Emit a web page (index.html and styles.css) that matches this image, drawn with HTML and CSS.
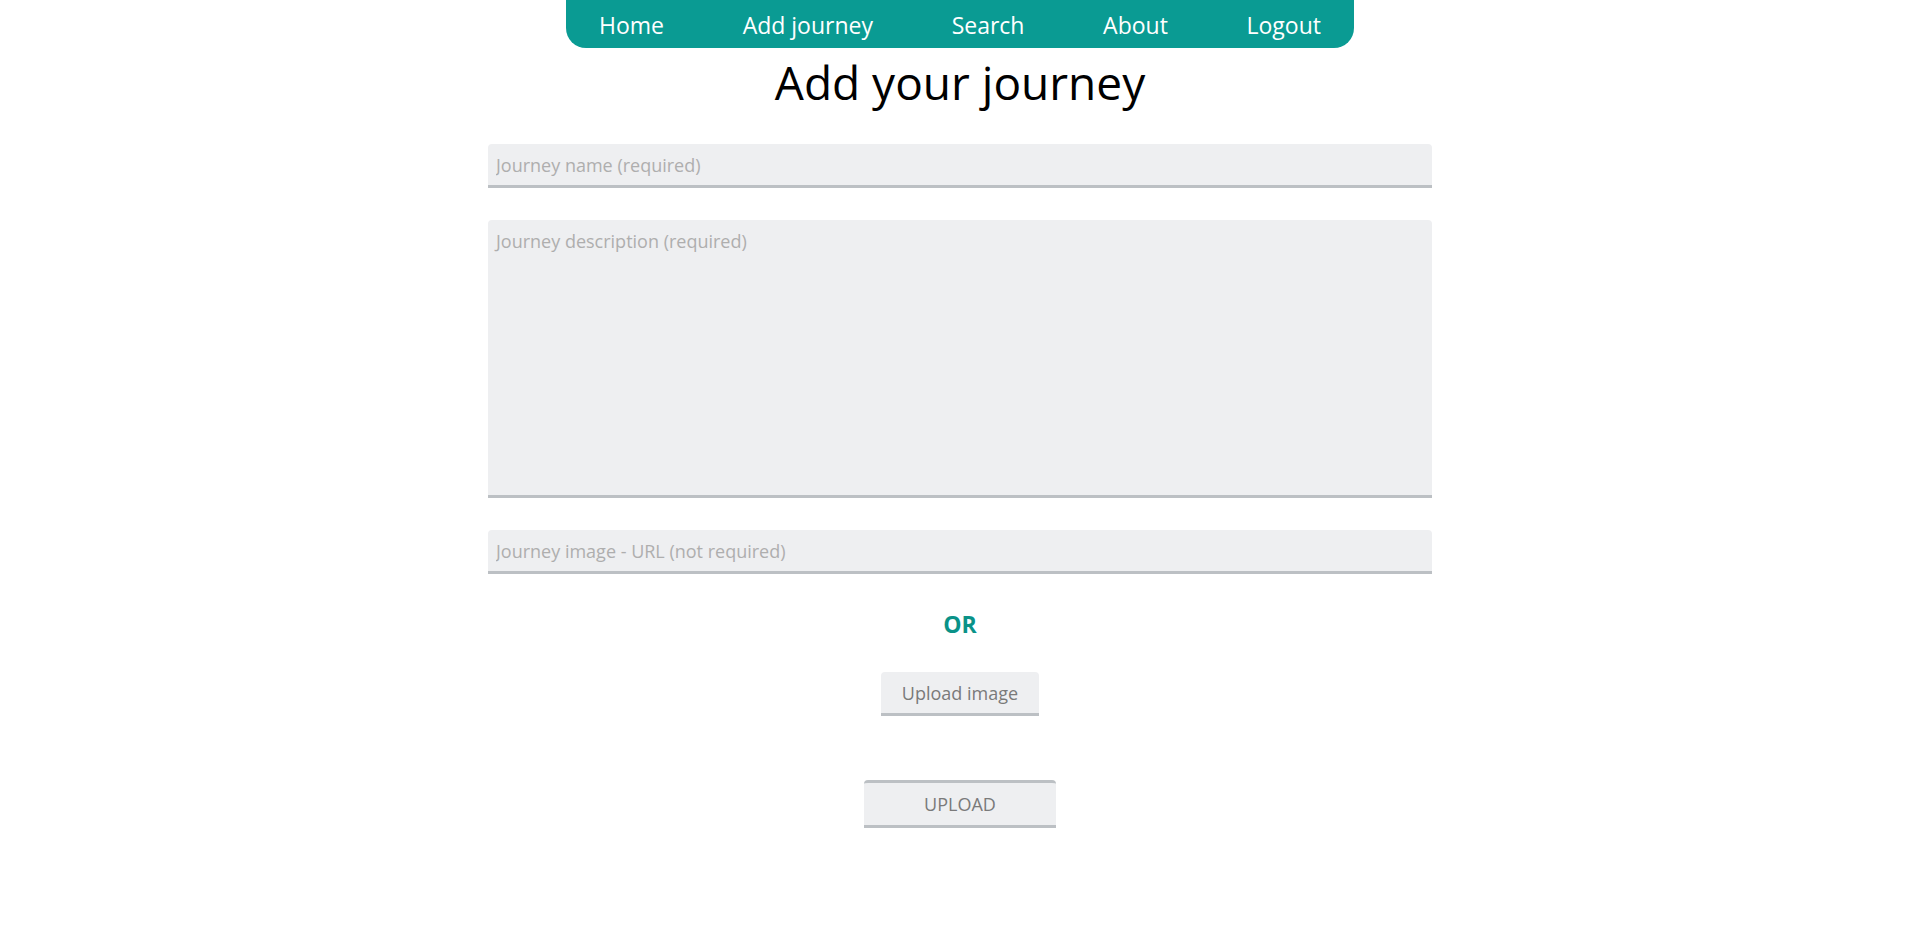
FILE: index.html
```html
<!DOCTYPE html>
<html lang="en">
<head>
<meta charset="utf-8">
<title>Add your journey</title>
<link rel="stylesheet" href="styles.css">
</head>
<body>
<nav class="topnav">
  <a class="nav-link" href="#">Home</a>
  <a class="nav-link" href="#">Add journey</a>
  <a class="nav-link" href="#">Search</a>
  <a class="nav-link" href="#">About</a>
  <a class="nav-link" href="#">Logout</a>
</nav>
<main class="page">
  <h1 class="title">Add your journey</h1>
  <form class="journey-form">
    <input class="field" type="text" placeholder="Journey name (required)">
    <textarea class="field field-area" placeholder="Journey description (required)"></textarea>
    <input class="field" type="text" placeholder="Journey image - URL (not required)">
    <div class="or">OR</div>
    <button type="button" class="btn btn-image">Upload image</button>
    <button type="button" class="btn btn-submit">UPLOAD</button>
  </form>
</main>
</body>
</html>
```
FILE: styles.css
```css
* { box-sizing: border-box; }
body {
  margin: 0;
  font-family: "Open Sans", "Noto Sans", sans-serif;
  background: #fff;
  color: #000;
}
.topnav {
  width: 788px;
  height: 48px;
  margin: 0 auto;
  background: #0a9b93;
  border-radius: 0 0 20px 20px;
  display: flex;
  justify-content: space-between;
  align-items: center;
  padding: 2px 33px 0;
}
.nav-link {
  color: #fff;
  text-decoration: none;
  font-size: 23px;
  line-height: 46px;
}
.page { display: flex; flex-direction: column; align-items: center; }
.title {
  margin: 4px 0 0;
  font-size: 46px;
  font-weight: 400;
  line-height: 60px;
}
.journey-form {
  width: 944px;
  margin-top: 32px;
  display: flex;
  flex-direction: column;
  align-items: center;
}
.field {
  width: 100%;
  height: 44px;
  border: none;
  border-bottom: 3px solid #bcc0c4;
  border-radius: 4px 4px 0 0;
  background: #eeeff1;
  font-family: inherit;
  font-size: 18px;
  padding: 0 8px;
  margin: 0 0 32px;
  outline: none;
  color: #333;
}
.field::placeholder { color: #aeaeae; }
.field-area {
  height: 278px;
  padding: 9px 8px;
  resize: none;
  display: block;
}
.or {
  margin-top: 3px;
  color: #0a9288;
  font-weight: 700;
  font-size: 23px;
  line-height: 30px;
}
.btn {
  border: none;
  background: #eeeff1;
  color: #7a7a7a;
  font-family: inherit;
  font-size: 18px;
  border-radius: 4px 4px 0 0;
}
.btn-image {
  margin-top: 33px;
  width: 158px;
  height: 44px;
  border-bottom: 3px solid #bcc0c4;
}
.btn-submit {
  margin-top: 64px;
  width: 192px;
  height: 48px;
  border-top: 3px solid #bcc0c4;
  border-bottom: 3px solid #bcc0c4;
  border-radius: 4px 4px 0 0;
}
```
